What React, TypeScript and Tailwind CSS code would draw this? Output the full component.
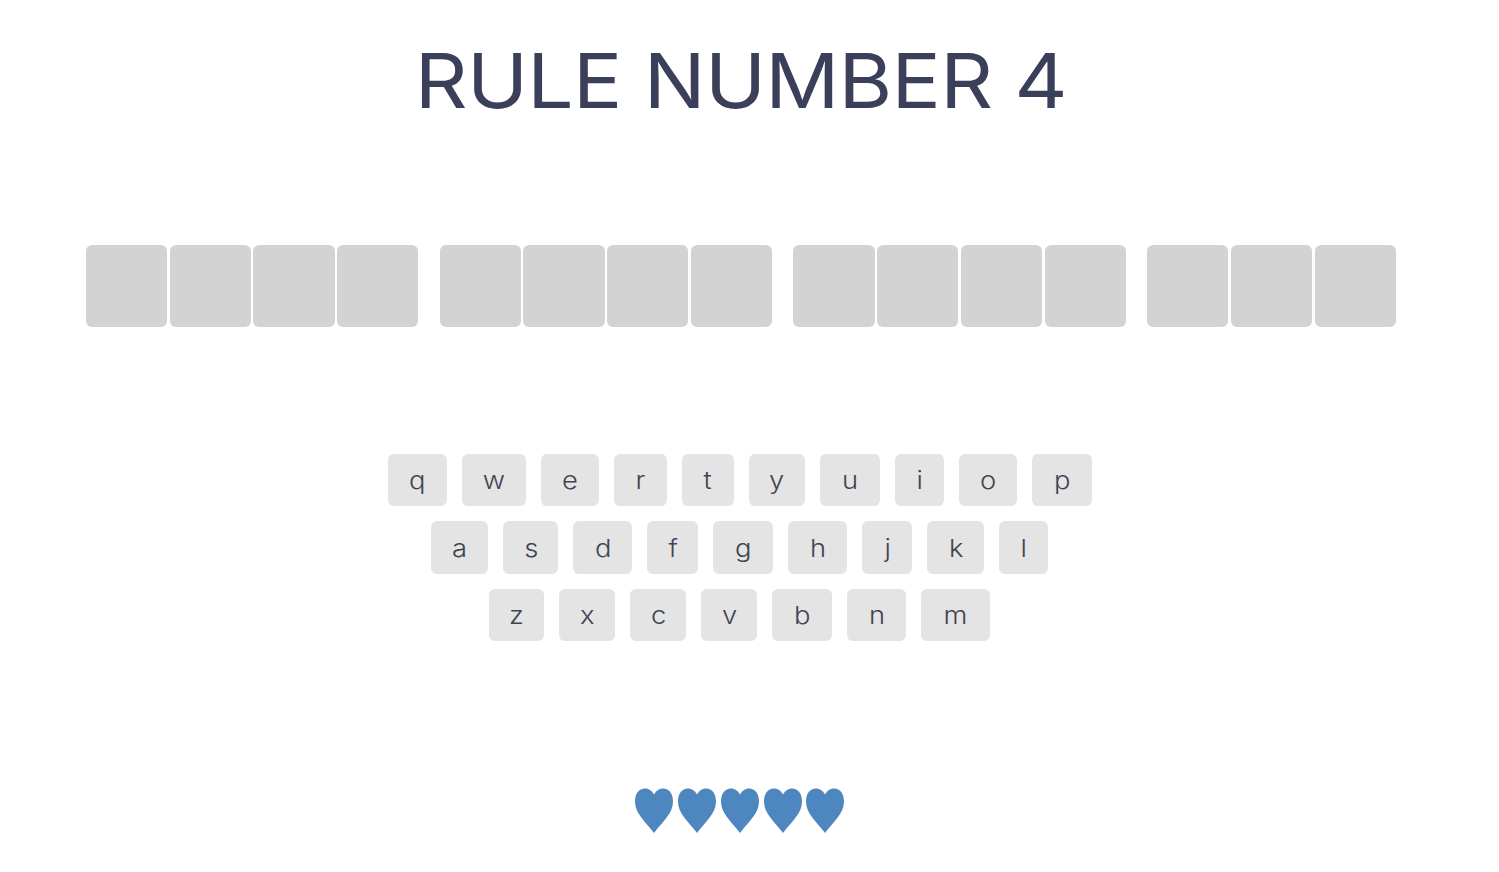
const rows: [string, string][][] = [
  [["q", "w-[59px]"], ["w", "w-[64px]"], ["e", "w-[58px]"], ["r", "w-[53px]"], ["t", "w-[52px]"], ["y", "w-[56px]"], ["u", "w-[60px]"], ["i", "w-[49px]"], ["o", "w-[58px]"], ["p", "w-[60px]"]],
  [["a", "w-[57px]"], ["s", "w-[55px]"], ["d", "w-[59px]"], ["f", "w-[51px]"], ["g", "w-[60px]"], ["h", "w-[59px]"], ["j", "w-[50px]"], ["k", "w-[57px]"], ["l", "w-[49px]"]],
  [["z", "w-[55px]"], ["x", "w-[56px]"], ["c", "w-[56px]"], ["v", "w-[56px]"], ["b", "w-[60px]"], ["n", "w-[59px]"], ["m", "w-[69px]"]],
];
const groups = [4, 4, 4, 3];

function Heart() {
  return (
    <svg width="40" height="45" viewBox="0 0 40 45" className="block">
      <path
        d="M20 45C12 34 1 26 1 13.500C1 5.500 5 0.500 11 0.500C15 0.500 18 3 20 6.500C22 3 25 0.500 29 0.500C35 0.500 39 5.500 39 13.500C39 26 28 34 20 45Z"
        fill="#4e86bf"
      />
    </svg>
  );
}

export default function App() {
  return (
    <div className="w-[1481.8px] h-[872px] bg-white flex flex-col items-center font-['Inter','Liberation_Sans',sans-serif] overflow-hidden">
      <h1 className="mt-[35px] h-[90px] text-[76px] leading-[90px] font-[425] text-[#3a405a] whitespace-nowrap tracking-[-0.7px] scale-x-[1.08]">
        RULE NUMBER 4
      </h1>
      <div className="mt-[120px] flex gap-[21.25px]">
        {groups.map((n, g) => (
          <div key={g} className="flex gap-[2.5px]">
            {Array.from({ length: n }).map((_, i) => (
              <div key={i} className="w-[81.25px] h-[82px] rounded-[6px] bg-[#d3d3d3]" />
            ))}
          </div>
        ))}
      </div>
      <div className="mt-[126.75px] mr-[2px] flex flex-col items-center gap-[15px]">
        {rows.map((row, r) => (
          <div key={r} className="flex gap-[15px]">
            {row.map(([k, w]) => (
              <div
                key={k}
                className={`${w} h-[52.500px] rounded-[6px] bg-[#e4e4e4] flex items-center justify-center pt-[2px] text-[24px] font-light text-[#404452]`}
              >
                <span className="inline-block scale-x-[1.14]">{k}</span>
              </div>
            ))}
          </div>
        ))}
      </div>
      <div className="mt-[146.75px] mr-[2px] flex gap-[2.800px]">
        {[0, 1, 2, 3, 4].map((i) => (
          <Heart key={i} />
        ))}
      </div>
    </div>
  );
}
